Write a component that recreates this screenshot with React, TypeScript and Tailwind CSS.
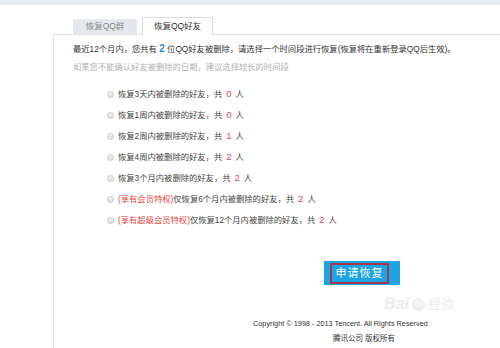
import React from 'react';

const font = { fontFamily: '"Liberation Sans", "Noto Sans CJK SC", sans-serif' };

type Option = { pre?: string; text: string; count: number };

const options: Option[] = [
  { text: '恢复3天内被删除的好友，共', count: 0 },
  { text: '恢复1周内被删除的好友，共', count: 0 },
  { text: '恢复2周内被删除的好友，共', count: 1 },
  { text: '恢复4周内被删除的好友，共', count: 2 },
  { text: '恢复3个月内被删除的好友，共', count: 2 },
  { pre: '(享有会员特权)', text: '仅恢复6个月内被删除的好友，共', count: 2 },
  { pre: '(享有超级会员特权)', text: '仅恢复12个月内被删除的好友，共', count: 2 },
];

function Radio() {
  return (
    <span className="inline-block w-[7px] h-[7px] rounded-full border border-[#cacaca] bg-gradient-to-b from-[#f4f4f4] to-[#dedede] mr-[4px]" />
  );
}

export default function App() {
  return (
    <div className="relative w-[500px] h-[348px] bg-white overflow-hidden" style={font}>
      <div className="h-[5px] bg-[#e7ecf3]" />

      <div className="flex items-end gap-[5px] pl-[73px] h-[29px]">
        <div className="w-[64px] h-[15px] bg-[#e4e8ed] text-[#8a8a8a] text-[8.5px] flex items-center justify-center">
          恢复QQ群
        </div>
        <div className="w-[71px] h-[18px] bg-white border border-[#dcdcdc] border-b-0 text-[#333] text-[8.5px] flex items-center justify-center -mb-px relative z-10">
          恢复QQ好友
        </div>
      </div>

      <div className="ml-[53px] border-t border-l border-[#e2e2e2] pl-[19px] pt-[8px] h-[320px]">
        <p className="text-[8.3px] leading-[12px] text-[#333]">
          最近12个月内，您共有 <span className="text-[#2a8ad8] font-bold text-[10px]">2</span> 位QQ好友被删除，请选择一个时间段进行恢复(恢复将在重新登录QQ后生效)。
        </p>
        <p className="mt-[6px] text-[8.3px] leading-[12px] text-[#b0b0b0]">
          如果您不能确认好友被删除的日期，建议选择较长的时间段
        </p>

        <ul className="mt-[11px] pl-[34px]">
          {options.map((o, i) => (
            <li key={i} className="h-[21px] flex items-center text-[8.3px] text-[#444]">
              <Radio />
              {o.pre && <span className="text-[#e5473f]">{o.pre}</span>}
              <span>{o.text}</span>
              <span className="text-[#e5475a] text-[9.5px] mx-[4px]">{o.count}</span>
              <span>人</span>
            </li>
          ))}
        </ul>

        <div className="mt-[30px] ml-[251px] w-[76px] h-[24px] bg-[#1ea4e0] flex items-center pl-[6px]">
          <div className="w-[59px] h-[21px] border-2 border-[#a2384f] flex items-center justify-center text-white text-[11px] tracking-[1px]">
            申请恢复
          </div>
        </div>

        <div className="mt-[33px] ml-[180px] text-[7.3px] leading-[12px] text-[#333]">
          Copyright © 1998 - 2013 Tencent. All Rights Reserved
        </div>
        <div className="mt-[3px] ml-[260px] text-[7.5px] leading-[12px] text-[#333]">
          腾讯公司 版权所有
        </div>
      </div>

      <div className="absolute left-[384px] top-[295px] flex items-center gap-[3px] text-[#ececec] pointer-events-none">
        <span className="text-[16px] leading-[18px] font-bold italic">Bai</span>
        <span className="w-[13px] h-[13px] rounded-full bg-[#efefef] text-white text-[7px] flex items-center justify-center">du</span>
        <span className="text-[13px] leading-[18px]">经验</span>
      </div>
    </div>
  );
}
